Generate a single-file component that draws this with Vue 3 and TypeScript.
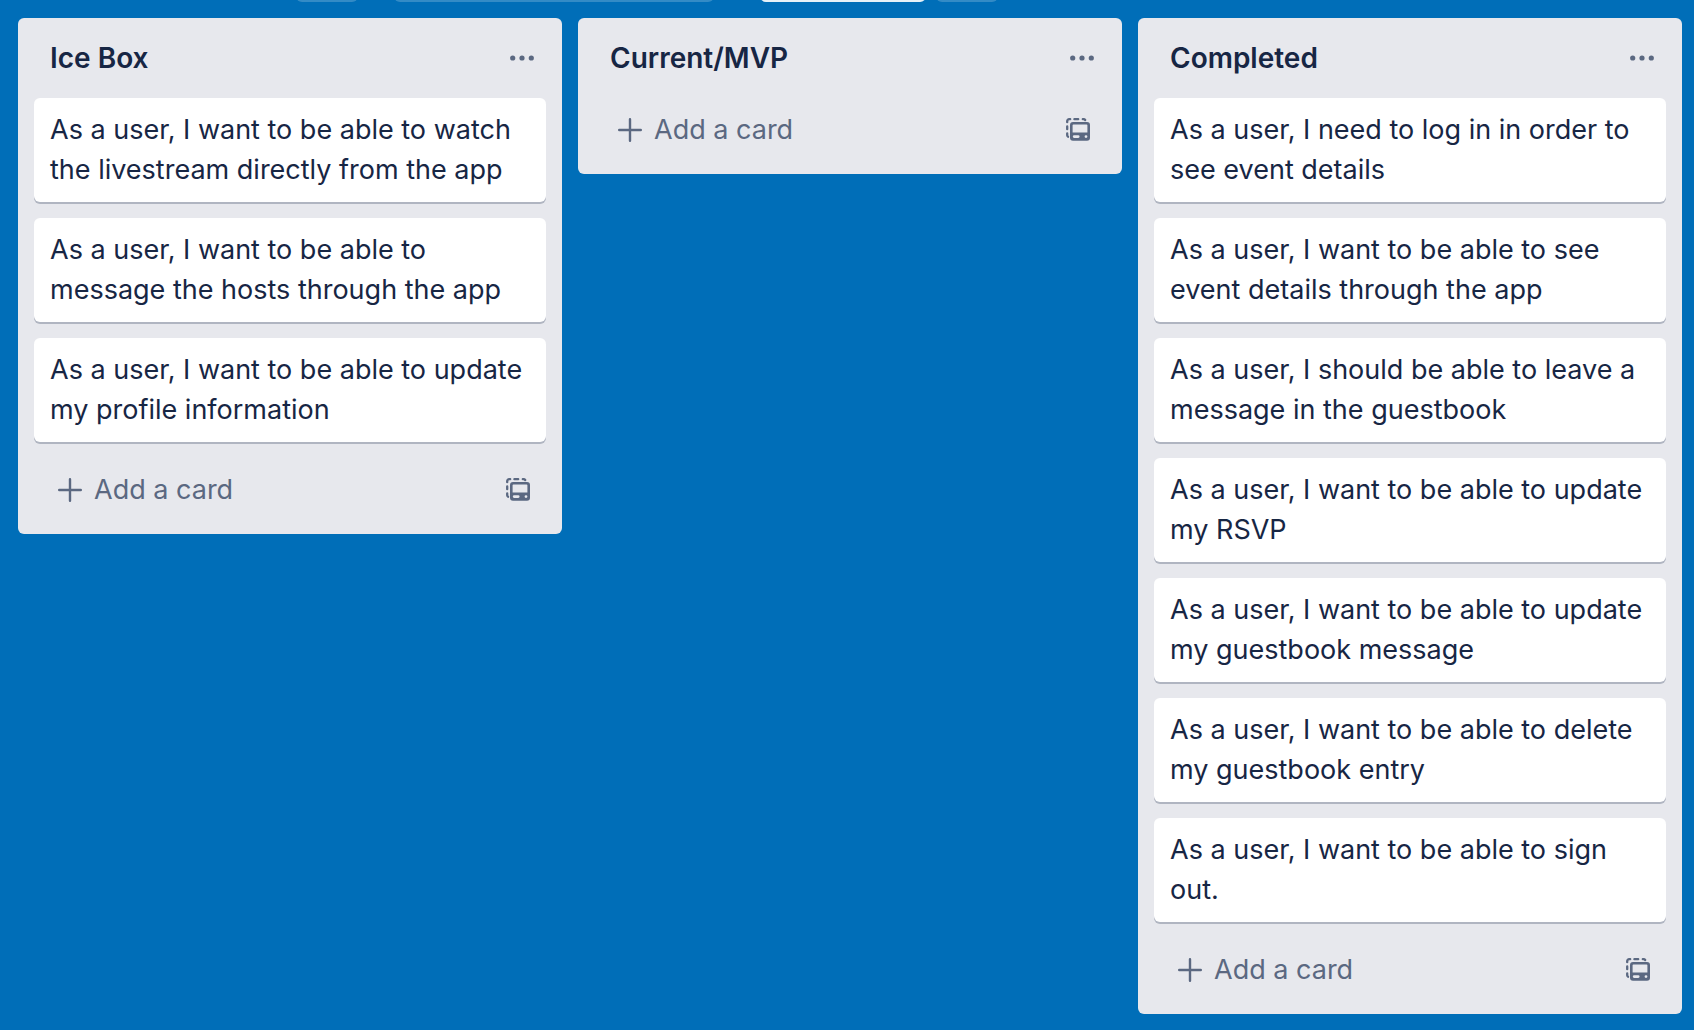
<script setup lang="ts">
interface BoardList {
  title: string
  cards: string[]
}

const lists: BoardList[] = [
  {
    title: 'Ice Box',
    cards: [
      'As a user, I want to be able to watch the livestream directly from the app',
      'As a user, I want to be able to message the hosts through the app',
      'As a user, I want to be able to update my profile information',
    ],
  },
  { title: 'Current/MVP', cards: [] },
  {
    title: 'Completed',
    cards: [
      'As a user, I need to log in in order to see event details',
      'As a user, I want to be able to see event details through the app',
      'As a user, I should be able to leave a message in the guestbook',
      'As a user, I want to be able to update my RSVP',
      'As a user, I want to be able to update my guestbook message',
      'As a user, I want to be able to delete my guestbook entry',
      'As a user, I want to be able to sign out.',
    ],
  },
]
</script>

<template>
  <div class="board">
    <!-- Lower edge of the board toolbar, scrolled out of view -->
    <div class="toolbar" aria-hidden="true">
      <span class="chip small"></span>
      <span class="chip wide"></span>
      <span class="chip solid"></span>
      <span class="chip small last"></span>
    </div>

    <main class="lists">
      <section v-for="list in lists" :key="list.title" class="list">
        <header class="list-header">
          <h2>{{ list.title }}</h2>
          <button type="button" class="icon-button" aria-label="List actions">
            <svg width="24" height="24" viewBox="0 0 24 24" fill="currentColor">
              <circle cx="2.7" cy="12" r="2.6" />
              <circle cx="12" cy="12" r="2.6" />
              <circle cx="21.3" cy="12" r="2.6" />
            </svg>
          </button>
        </header>

        <ul v-if="list.cards.length" class="cards">
          <li v-for="card in list.cards" :key="card" class="card">{{ card }}</li>
        </ul>

        <footer class="list-footer">
          <button type="button" class="add">
            <svg width="24" height="24" viewBox="0 0 24 24" fill="none" stroke="currentColor" stroke-width="2.4" stroke-linecap="round">
              <path d="M12 1.2v21.6M1.2 12h21.6" />
            </svg>
            Add a card
          </button>
          <button type="button" class="icon-button" aria-label="Create from template">
            <svg width="24" height="24" viewBox="0 0 24 24" fill="currentColor">
              <path
                d="M1.2 4.2V3.2a2 2 0 0 1 2-2H4.2M8.4 1.2H12.2M16.8 1.2H17.6a2 2 0 0 1 1.6.8M1.2 8.4V11.2M1.2 15.4V17.2a2 2 0 0 0 .8 1.5"
                fill="none"
                stroke="currentColor"
                stroke-width="2.3"
                stroke-linecap="round"
              />
              <path
                fill-rule="evenodd"
                d="M7 4h14a3 3 0 0 1 3 3v12.800a3 3 0 0 1-3 3H7a3 3 0 0 1-3-3V7a3 3 0 0 1 3-3ZM7.400 6.400a.8.8 0 0 0-.8.8V14.600h14.800V7.200a.8.8 0 0 0-.8-.8ZM8.200 17.200a1.400 1.400 0 0 0 0 2.800h4a1.400 1.400 0 0 0 0-2.800ZM20 17.200a1.400 1.400 0 1 0 0 2.800a1.400 1.400 0 0 0 0-2.800Z"
              />
            </svg>
          </button>
        </footer>
      </section>
    </main>
  </div>
</template>

<style>
body {
  margin: 0;
  background: #006eb8;
}
</style>

<style scoped>
.board {
  font-family: Inter, 'Liberation Sans', sans-serif;
  font-size: 27px;
  line-height: 40px;
  color: #172644;
}

.toolbar {
  display: flex;
  align-items: flex-end;
  height: 2px;
  overflow: hidden;
  padding-left: 296px;
}

.chip {
  flex: none;
  height: 64px;
  border-radius: 6px;
  background: #338bc6;
}

.small {
  width: 62px;
}

.wide {
  width: 320px;
  margin-left: 36px;
}

.solid {
  width: 166px;
  margin-left: 46px;
  background: #e6f1f8;
}

.last {
  margin-left: 10px;
}

.lists {
  display: grid;
  grid-template-columns: repeat(3, minmax(0, 1fr));
  align-items: start;
  gap: 16px;
  padding: 16px 12px 12px 18px;
}

.list {
  padding: 0 16px 12px;
  border-radius: 6px;
  background: #e7e8ed;
}

.list-header {
  display: flex;
  align-items: center;
  justify-content: space-between;
  height: 80px;
  padding: 0 12px 0 16px;
}

h2 {
  margin: 0;
  font-size: 28px;
  font-weight: 600;
  line-height: 40px;
}

button {
  border: 0;
  padding: 0;
  background: none;
  color: #5b6881;
  font: inherit;
  cursor: pointer;
}

svg {
  display: block;
}

.cards {
  display: grid;
  gap: 16px;
  margin: 0 0 16px;
  padding: 0;
  list-style: none;
}

.card {
  padding: 12px 16px;
  border-radius: 6px;
  background: #fff;
  box-shadow: 0 2px 0 #b0b5c1;
}

.list-footer {
  display: flex;
  align-items: center;
  justify-content: space-between;
  height: 64px;
  padding: 0 16px 0 24px;
}

.add {
  display: flex;
  align-items: center;
  gap: 12px;
}
</style>
